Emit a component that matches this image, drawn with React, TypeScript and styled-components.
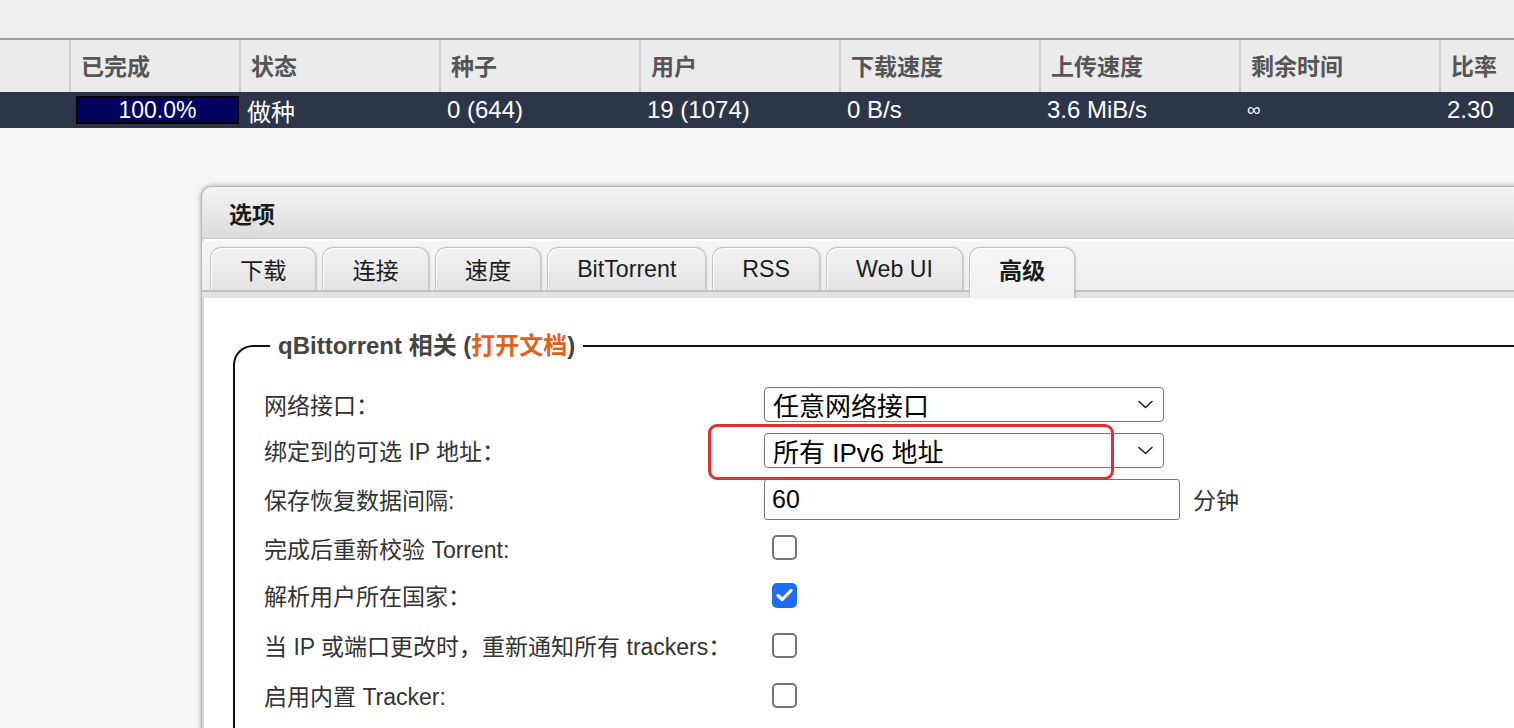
import React from "react";
import styled, { createGlobalStyle, css } from "styled-components";

const FONT = `"Liberation Sans", "Noto Sans CJK SC", sans-serif`;

const Global = createGlobalStyle`
  html, body { margin: 0; padding: 0; }
  body {
    background: #f6f6f6;
    font-family: ${FONT};
    overflow: hidden;
    width: 1514px;
    height: 728px;
  }
`;

const Page = styled.div`
  width: 1514px;
  height: 728px;
  overflow: hidden;
`;

const Toolbar = styled.div`
  height: 38px;
  background: #efefef;
  border-bottom: 2px solid #9a9a9a;
`;

const COLS = "71px 170px 200px 200px 200px 200px 200px 200px 200px";

const HeaderRow = styled.div`
  display: grid;
  grid-template-columns: ${COLS};
  height: 52px;
  background: #ebebeb;
`;

const HeaderCell = styled.div`
  display: flex;
  align-items: center;
  padding: 0 0 3px 10px;
  font-size: 23px;
  font-weight: bold;
  color: #555;
  white-space: nowrap;
  border-right: 2px solid #cdcdcd;
`;

const DataRow = styled.div`
  display: grid;
  grid-template-columns: ${COLS};
  height: 36px;
  background: #2d3649;
`;

const DataCell = styled.div<{ $small?: boolean }>`
  display: flex;
  align-items: center;
  padding-left: 6px;
  font-size: ${(p) => (p.$small ? "19px" : "24px")};
  color: #fff;
  white-space: nowrap;
`;

const ProgressCell = styled.div`
  display: flex;
  align-items: center;
  padding: 0 2px 0 5px;
`;

const Progress = styled.div`
  flex: 1;
  height: 28px;
  box-sizing: border-box;
  border: 2px solid #000;
  background: #02035c;
  color: #fff;
  font-size: 23px;
  display: flex;
  align-items: center;
  justify-content: center;
`;

const Dialog = styled.div`
  margin: 58px 0 0 201px;
  width: 1400px;
  height: 600px;
  background: #fff;
  border: 1px solid #b8b8b8;
  border-right: none;
  border-radius: 11px 0 0 0;
  box-shadow: 0 0 5px rgba(0, 0, 0, 0.35), inset 2px 0 0 #d8d8d8;
  overflow: hidden;
`;

const TitleBar = styled.div`
  height: 51px;
  display: flex;
  align-items: center;
  padding-left: 27px;
  background: linear-gradient(#f4f4f4, #dcdcdc);
  border-bottom: 1px solid #c8c8c8;
  font-size: 23px;
  font-weight: bold;
  color: #1a1a1a;
`;

const TabStrip = styled.div`
  margin-top: 2px;
  height: 57px;
  box-sizing: border-box;
  display: flex;
  align-items: flex-end;
  gap: 6px;
  padding-left: 8px;
  background: linear-gradient(#f6f6f6, #eeeeee 85%);
  border-bottom: 6px solid #e4e4e4;
  position: relative;
  &::after {
    content: "";
    position: absolute;
    left: 0;
    right: 0;
    bottom: 0;
    height: 2px;
    background: #c2c2c2;
  }
`;

const Tab = styled.div<{ $active?: boolean }>`
  height: 45px;
  box-sizing: border-box;
  padding: 0 29px 2px;
  display: flex;
  align-items: center;
  font-size: 23.2px;
  color: #1c1c1c;
  border: 1px solid #c4c4c4;
  border-bottom: none;
  border-radius: 11px 11px 0 0;
  background: linear-gradient(#f3f3f3, #e2e2e2);
  box-shadow: inset 1px 1px 0 #fff, 1px 0 2px rgba(0, 0, 0, 0.15);
  white-space: nowrap;
  ${(p) =>
    p.$active &&
    css`
      font-weight: bold;
      background: linear-gradient(#f7f7f7, #f0f0f0);
      height: 51px;
      padding-bottom: 8px;
      margin-bottom: -6px;
      position: relative;
      z-index: 1;
    `}
`;

const Content = styled.div`
  padding: 35px 0 0 31px;
`;

const Fieldset = styled.fieldset`
  margin: 0;
  padding: 22px 29px 20px;
  border: 2px solid #111;
  border-right: none;
  border-bottom: none;
  border-radius: 20px 0 0 0;
  min-width: 0;
`;

const Legend = styled.legend`
  margin-left: 6px;
  padding: 0 8px;
  font-size: 24px;
  font-weight: bold;
  color: #444;
  line-height: 26px;
`;

const DocLink = styled.span`
  color: #e0601c;
`;

const Row = styled.div<{ $h: number }>`
  display: grid;
  grid-template-columns: 500px auto;
  align-items: center;
  height: ${(p) => p.$h}px;
`;

const Label = styled.div`
  font-size: 23px;
  color: #333;
  white-space: nowrap;
`;

const Control = styled.div`
  position: relative;
  display: flex;
  align-items: center;
  gap: 13px;
`;

const SelectBox = styled.div`
  width: 400px;
  height: 35px;
  box-sizing: border-box;
  border: 1px solid #767676;
  border-radius: 4px;
  background: #fff;
  display: flex;
  align-items: center;
  justify-content: space-between;
  padding: 0 10px 0 8px;
  font-size: 26px;
  color: #000;
`;

const TextBox = styled.div`
  width: 416px;
  height: 41px;
  box-sizing: border-box;
  border: 1px solid #767676;
  border-radius: 3px;
  background: #fff;
  display: flex;
  align-items: center;
  padding-left: 7px;
  font-size: 25px;
  color: #000;
`;

const Unit = styled.span`
  font-size: 23px;
  color: #333;
`;

const Checkbox = styled.div<{ $checked?: boolean }>`
  margin-left: 8px;
  width: 25px;
  height: 25px;
  box-sizing: border-box;
  border-radius: 5px;
  display: flex;
  align-items: center;
  justify-content: center;
  ${(p) =>
    p.$checked
      ? css`
          background: #1f6ef2;
        `
      : css`
          border: 2px solid #747474;
          background: #fff;
        `}
`;

const Highlight = styled.div`
  position: absolute;
  left: -56px;
  top: -9px;
  width: 406px;
  height: 56px;
  box-sizing: border-box;
  border: 3px solid #e3302b;
  border-radius: 9px;
  pointer-events: none;
  z-index: 5;
`;

const Chevron = () => (
  <svg width="15" height="9" viewBox="0 0 15 9" fill="none">
    <path d="M1 1.5 L7.5 7.5 L14 1.5" stroke="#222" strokeWidth="1.6" strokeLinecap="round" strokeLinejoin="round" />
  </svg>
);

const Check = () => (
  <svg width="17" height="14" viewBox="0 0 17 14" fill="none">
    <path d="M2 7.5 L6.3 11.5 L15 2.5" stroke="#fff" strokeWidth="3.2" strokeLinecap="round" strokeLinejoin="round" />
  </svg>
);

const headers = ["", "已完成", "状态", "种子", "用户", "下载速度", "上传速度", "剩余时间", "比率"];
const tabs = ["下载", "连接", "速度", "BitTorrent", "RSS", "Web UI", "高级"];

const checkRows = [
  { label: "完成后重新校验 Torrent:", checked: false, h: 45 },
  { label: "解析用户所在国家：", checked: true, h: 50 },
  { label: "当 IP 或端口更改时，重新通知所有 trackers：", checked: false, h: 50 },
  { label: "启用内置 Tracker:", checked: false, h: 50 },
];

export default function App() {
  return (
    <Page>
      <Global />
      <Toolbar />
      <HeaderRow>
        {headers.map((h, i) => (
          <HeaderCell key={i}>{h}</HeaderCell>
        ))}
      </HeaderRow>
      <DataRow>
        <DataCell />
        <ProgressCell>
          <Progress>100.0%</Progress>
        </ProgressCell>
        <DataCell>做种</DataCell>
        <DataCell>0 (644)</DataCell>
        <DataCell>19 (1074)</DataCell>
        <DataCell>0 B/s</DataCell>
        <DataCell>3.6 MiB/s</DataCell>
        <DataCell $small>∞</DataCell>
        <DataCell>2.30</DataCell>
      </DataRow>

      <Dialog>
        <TitleBar>选项</TitleBar>
        <TabStrip>
          {tabs.map((t) => (
            <Tab key={t} $active={t === "高级"}>
              {t}
            </Tab>
          ))}
        </TabStrip>
        <Content>
          <Fieldset>
            <Legend>
              qBittorrent 相关 (<DocLink>打开文档</DocLink>)
            </Legend>
            <Row $h={46}>
              <Label>网络接口：</Label>
              <Control>
                <SelectBox>
                  <span>任意网络接口</span>
                  <Chevron />
                </SelectBox>
              </Control>
            </Row>
            <Row $h={46}>
              <Label>绑定到的可选 IP 地址：</Label>
              <Control>
                <SelectBox>
                  <span>所有 IPv6 地址</span>
                  <Chevron />
                </SelectBox>
                <Highlight />
              </Control>
            </Row>
            <Row $h={52}>
              <Label>保存恢复数据间隔:</Label>
              <Control>
                <TextBox>60</TextBox>
                <Unit>分钟</Unit>
              </Control>
            </Row>
            {checkRows.map((r) => (
              <Row $h={r.h} key={r.label}>
                <Label>{r.label}</Label>
                <Control>
                  <Checkbox $checked={r.checked}>{r.checked && <Check />}</Checkbox>
                </Control>
              </Row>
            ))}
          </Fieldset>
        </Content>
      </Dialog>
    </Page>
  );
}
